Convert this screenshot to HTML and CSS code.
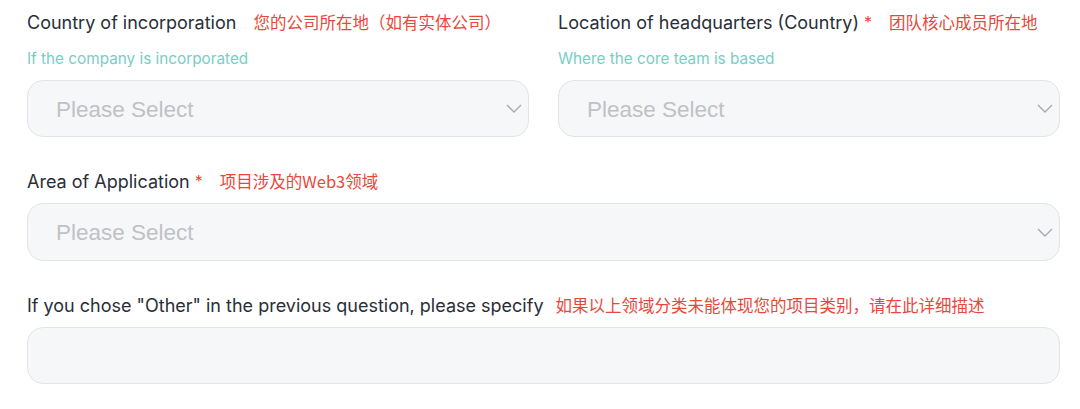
FILE: index.html
```html
<!DOCTYPE html>
<html lang="en">
<head>
<meta charset="utf-8">
<title>Form</title>
<link rel="stylesheet" href="styles.css">
</head>
<body>
<div class="form">
  <div class="row-two">
    <div class="field">
      <div class="label">Country of incorporation<span class="note">您的公司所在地（如有实体公司）</span></div>
      <div class="help">If the company is incorporated</div>
      <div class="select">
        <span class="placeholder">Please Select</span>
        <svg class="chev" width="16" height="9" viewBox="0 0 16 9"><path d="M1 1l7 7 7-7" fill="none" stroke="#a7a9b0" stroke-width="1.4"/></svg>
      </div>
    </div>
    <div class="field">
      <div class="label">Location of headquarters (Country) <span class="req">*</span><span class="note">团队核心成员所在地</span></div>
      <div class="help">Where the core team is based</div>
      <div class="select">
        <span class="placeholder">Please Select</span>
        <svg class="chev" width="16" height="9" viewBox="0 0 16 9"><path d="M1 1l7 7 7-7" fill="none" stroke="#a7a9b0" stroke-width="1.4"/></svg>
      </div>
    </div>
  </div>
  <div class="field">
    <div class="label tight">Area of Application <span class="req">*</span><span class="note">项目涉及的Web3领域</span></div>
    <div class="select tall">
      <span class="placeholder">Please Select</span>
      <svg class="chev" width="16" height="9" viewBox="0 0 16 9"><path d="M1 1l7 7 7-7" fill="none" stroke="#a7a9b0" stroke-width="1.4"/></svg>
    </div>
  </div>
  <div class="field">
    <div class="label tight">If you chose "Other" in the previous question, please specify<span class="note small-gap">如果以上领域分类未能体现您的项目类别，请在此详细描述</span></div>
    <div class="input"></div>
  </div>
</div>
</body>
</html>
```
FILE: styles.css
```css
* { box-sizing: border-box; }
html, body { margin: 0; padding: 0; background: #ffffff; }
body { width: 1080px; height: 409px; overflow: hidden; }

.form {
  padding: 10px 20px 0 27px;
  display: flex;
  flex-direction: column;
  gap: 32px;
}

.row-two {
  display: grid;
  grid-template-columns: 1fr 1fr;
  column-gap: 29px;
}

.field { display: flex; flex-direction: column; }

.label {
  font-family: Inter, "Noto Sans CJK SC", sans-serif;
  font-size: 18px;
  line-height: 24px;
  color: #2a2e38;
  white-space: nowrap;
}
.label.tight { margin-bottom: 9px; }

.req {
  color: #e8483b;
  font-size: 16px;
  vertical-align: 1px;
}

.note {
  font-family: "Noto Sans CJK SC", sans-serif;
  font-size: 16.5px;
  color: #e8483b;
  margin-left: 17px;
}
.note.small-gap { margin-left: 12px; }

.help {
  font-family: Inter, sans-serif;
  font-size: 15.3px;
  line-height: 20px;
  color: #7acdc6;
  margin: 14px 0 11px;
}

.select, .input {
  height: 57px;
  background: #f6f7f9;
  border: 1px solid #e2e4ea;
  border-radius: 16px;
  display: flex;
  align-items: center;
  justify-content: space-between;
  padding: 2px 6px 0 28px;
}
.select.tall { height: 58px; }

.placeholder {
  font-family: "Liberation Sans", Arial, sans-serif;
  font-size: 22.5px;
  color: #c0c1c6;
}

.chev { display: block; margin-top: -2px; }
```
